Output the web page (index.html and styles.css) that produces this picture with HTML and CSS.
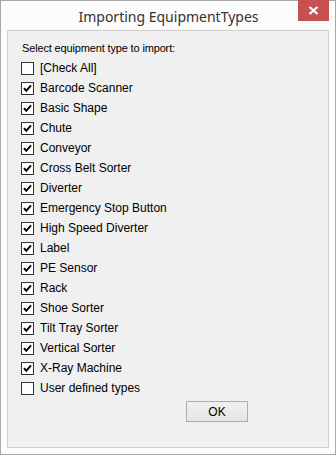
FILE: index.html
```html
<!DOCTYPE html>
<html>
<head>
<meta charset="utf-8">
<link rel="stylesheet" href="styles.css">
</head>
<body>
<div class="window">
  <div class="titlebar">
    <div class="title">Importing EquipmentTypes</div>
    <div class="close">
      <svg width="11" height="9" viewBox="0 0 11 9"><path d="M1.5 1 L9.5 8 M9.5 1 L1.5 8" stroke="#fff" stroke-width="2.2" fill="none"/></svg>
    </div>
  </div>
  <div class="client">
    <div class="prompt">Select equipment type to import:</div>
    <ul class="list">
      <li class="item"><span class="box"></span><span>[Check All]</span></li>
      <li class="item"><span class="box checked"><svg viewBox="0 0 11 11"><path d="M2 5.2 L4.3 7.8 L9 2.4" /></svg></span><span>Barcode Scanner</span></li>
      <li class="item"><span class="box checked"><svg viewBox="0 0 11 11"><path d="M2 5.2 L4.3 7.8 L9 2.4" /></svg></span><span>Basic Shape</span></li>
      <li class="item"><span class="box checked"><svg viewBox="0 0 11 11"><path d="M2 5.2 L4.3 7.8 L9 2.4" /></svg></span><span>Chute</span></li>
      <li class="item"><span class="box checked"><svg viewBox="0 0 11 11"><path d="M2 5.2 L4.3 7.8 L9 2.4" /></svg></span><span>Conveyor</span></li>
      <li class="item"><span class="box checked"><svg viewBox="0 0 11 11"><path d="M2 5.2 L4.3 7.8 L9 2.4" /></svg></span><span>Cross Belt Sorter</span></li>
      <li class="item"><span class="box checked"><svg viewBox="0 0 11 11"><path d="M2 5.2 L4.3 7.8 L9 2.4" /></svg></span><span>Diverter</span></li>
      <li class="item"><span class="box checked"><svg viewBox="0 0 11 11"><path d="M2 5.2 L4.3 7.8 L9 2.4" /></svg></span><span>Emergency Stop Button</span></li>
      <li class="item"><span class="box checked"><svg viewBox="0 0 11 11"><path d="M2 5.2 L4.3 7.8 L9 2.4" /></svg></span><span>High Speed Diverter</span></li>
      <li class="item"><span class="box checked"><svg viewBox="0 0 11 11"><path d="M2 5.2 L4.3 7.8 L9 2.4" /></svg></span><span>Label</span></li>
      <li class="item"><span class="box checked"><svg viewBox="0 0 11 11"><path d="M2 5.2 L4.3 7.8 L9 2.4" /></svg></span><span>PE Sensor</span></li>
      <li class="item"><span class="box checked"><svg viewBox="0 0 11 11"><path d="M2 5.2 L4.3 7.8 L9 2.4" /></svg></span><span>Rack</span></li>
      <li class="item"><span class="box checked"><svg viewBox="0 0 11 11"><path d="M2 5.2 L4.3 7.8 L9 2.4" /></svg></span><span>Shoe Sorter</span></li>
      <li class="item"><span class="box checked"><svg viewBox="0 0 11 11"><path d="M2 5.2 L4.3 7.8 L9 2.4" /></svg></span><span>Tilt Tray Sorter</span></li>
      <li class="item"><span class="box checked"><svg viewBox="0 0 11 11"><path d="M2 5.2 L4.3 7.8 L9 2.4" /></svg></span><span>Vertical Sorter</span></li>
      <li class="item"><span class="box checked"><svg viewBox="0 0 11 11"><path d="M2 5.2 L4.3 7.8 L9 2.4" /></svg></span><span>X-Ray Machine</span></li>
      <li class="item"><span class="box"></span><span>User defined types</span></li>
    </ul>
    <div class="actions"><button class="ok">OK</button></div>
  </div>
</div>
</body>
</html>
```
FILE: styles.css
```css
* { box-sizing: border-box; }
html, body { margin: 0; padding: 0; background: #fff; }
.window {
  width: 336px;
  height: 455px;
  border: 1px solid #a8a8a8;
  background: #fcfcfc;
  font-family: "Liberation Sans", Arial, sans-serif;
}
.titlebar {
  height: 29px;
  display: flex;
  justify-content: center;
  align-items: center;
  position: relative;
}
.title {
  font-family: "Noto Sans", "Open Sans", sans-serif;
  font-size: 14px;
  color: #333;
  margin-left: 1px;
  margin-top: 1px;
}
.close {
  position: absolute;
  top: -1px;
  right: 6px;
  width: 31px;
  height: 21px;
  background: #c75050;
  display: flex;
  align-items: center;
  justify-content: center;
}
.close svg { display: block; }
.client {
  margin-left: 6px;
  width: 322px;
  height: 418px;
  border: 1px solid #cfcfcf;
  background: #f0f0f0;
  padding: 10px 0 0 13px;
  display: flex;
  flex-direction: column;
}
.prompt {
  font-size: 11px;
  letter-spacing: -0.15px;
  color: #000;
  margin-left: 1px;
  height: 17px;
  line-height: 14px;
}
.list {
  list-style: none;
  margin: 0;
  padding: 0;
}
.item {
  height: 20px;
  display: flex;
  align-items: center;
  font-size: 12px;
  color: #000;
  gap: 6px;
}
.box {
  width: 13px;
  height: 13px;
  border: 1px solid #333;
  background: #fff;
  display: block;
}
.box svg {
  display: block;
  width: 11px;
  height: 11px;
}
.box svg path {
  fill: none;
  stroke: #000;
  stroke-width: 2;
}
.actions {
  display: flex;
  padding-left: 165px;
  margin-top: 3px;
}
.ok {
  width: 62px;
  height: 21px;
  border: 1px solid #adadad;
  background: linear-gradient(#f0f0f0, #e5e5e5);
  font-family: "Liberation Sans", Arial, sans-serif;
  font-size: 12px;
  color: #000;
  padding: 0;
}
```
